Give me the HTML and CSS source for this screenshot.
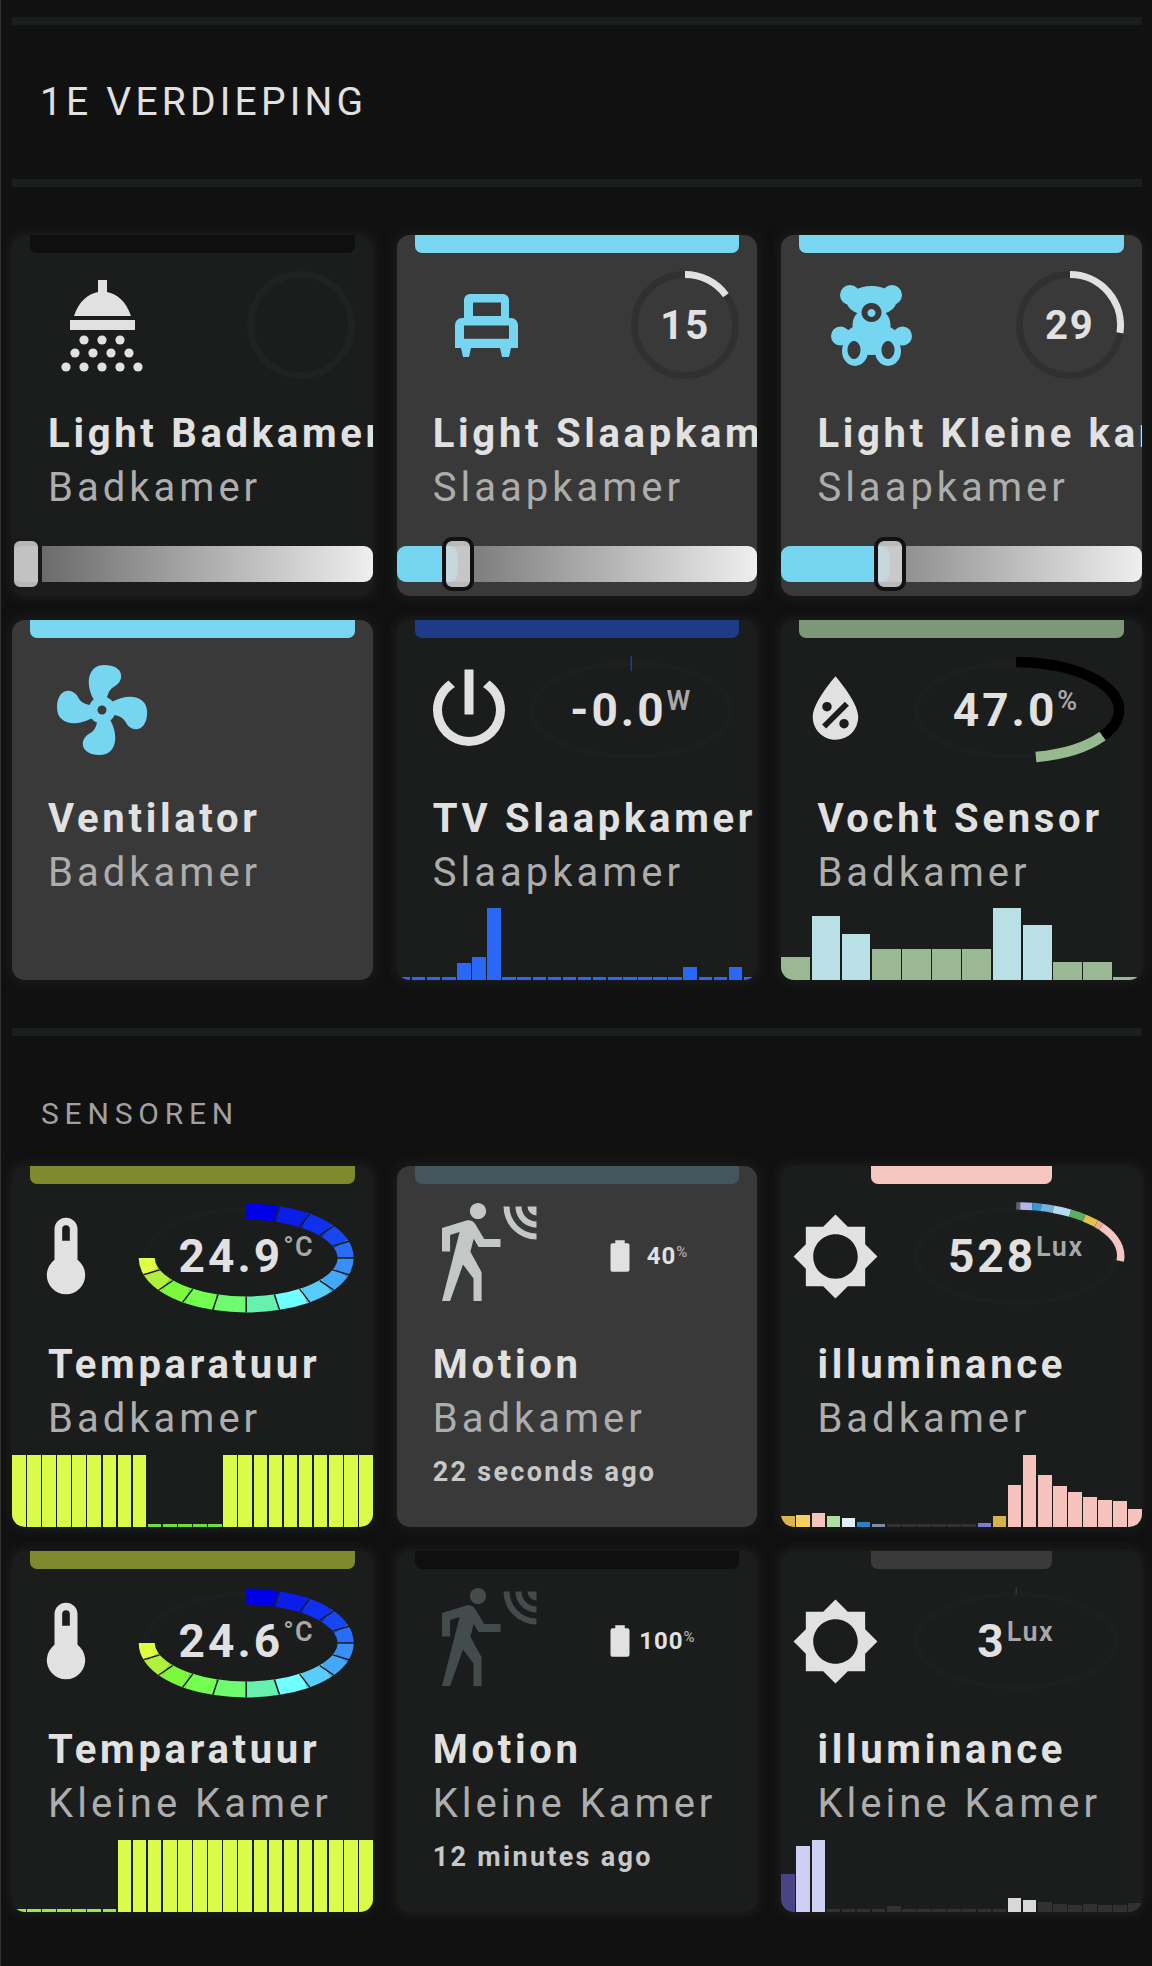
FILE: index.html
```html
<!DOCTYPE html>
<html>
<head>
    <title>1e Verdieping</title>
    <meta charset="utf-8">
    <link rel="stylesheet" href="styles.css">
</head>
<body>
<svg class="defs">
    <symbol id="temp-arc" viewBox="-108 -54 216 108" overflow="visible">
        <g class="temp-segs">
            <path stroke="#0000e8" d="M0-46.5A99.5 46.5 0 0 1 30.7-44.2"/>
            <path stroke="#0a1ee8" d="M30.7-44.2A99.5 46.5 0 0 1 58.5-37.6"/>
            <path stroke="#0f30ee" d="M58.5-37.6A99.5 46.5 0 0 1 80.5-27.3"/>
            <path stroke="#1846f0" d="M80.5-27.3A99.5 46.5 0 0 1 94.6-14.4"/>
            <path stroke="#2a6cf5" d="M94.6-14.4A99.5 46.5 0 0 1 99.5 0"/>
            <path stroke="#3a8ef8" d="M99.5 0A99.5 46.5 0 0 1 94.6 14.4"/>
            <path stroke="#44a8f8" d="M94.6 14.4A99.5 46.5 0 0 1 80.5 27.3"/>
            <path stroke="#58cdfb" d="M80.5 27.3A99.5 46.5 0 0 1 58.5 37.6"/>
            <path stroke="#70ffff" d="M58.5 37.6A99.5 46.5 0 0 1 30.7 44.2"/>
            <path stroke="#66f2ae" d="M30.7 44.2A99.5 46.5 0 0 1 0 46.5"/>
            <path stroke="#6ffb70" d="M0 46.5A99.5 46.5 0 0 1-30.7 44.2"/>
            <path stroke="#74ff50" d="M-30.7 44.2A99.5 46.5 0 0 1-58.5 37.6"/>
            <path stroke="#7bf93e" d="M-58.5 37.6A99.5 46.5 0 0 1-80.5 27.3"/>
            <path stroke="#b0f03f" d="M-80.5 27.3A99.5 46.5 0 0 1-94.6 14.4"/>
            <path stroke="#deff42" d="M-94.6 14.4A99.5 46.5 0 0 1-99.5 0"/>
        </g>
        <path class="temp-ticks" d="M28.1-36.6L33.4-51.8M53.5-31.1L63.5-44.1M73.6-22.6L87.4-32M86.5-11.9L102.7-16.8M91 0L108 0M86.5 11.9L102.7 16.8M73.6 22.6L87.4 32M53.5 31.1L63.5 44.1M28.1 36.6L33.4 51.8M0 38.5L0 54.5M-28.1 36.6L-33.4 51.8M-53.5 31.1L-63.5 44.1M-73.6 22.6L-87.4 32M-86.5 11.9L-102.7 16.8"/>
    </symbol>
    <symbol id="sun" viewBox="0 0 24 24">
        <path d="M20 8.69V4h-4.69L12 .69 8.69 4H4v4.69L.69 12 4 15.31V20h4.69L12 23.31 15.31 20H20v-4.69L23.31 12 20 8.69zM12 18c-3.31 0-6-2.69-6-6s2.69-6 6-6 6 2.69 6 6-2.69 6-6 6z"/>
    </symbol>
    <symbol id="thermo" viewBox="0 0 24 24">
        <path d="M15 13V5A3 3 0 0 0 9 5V13A5 5 0 1 0 15 13M12 4A1 1 0 0 1 13 5V8H11V5A1 1 0 0 1 12 4Z"/>
    </symbol>
    <symbol id="motion" viewBox="0 0 24 24">
        <path d="M10,0.2C9,0.2 8.2,1 8.2,2C8.2,3 9,3.8 10,3.8C11,3.8 11.8,3 11.8,2C11.8,1 11,0.2 10,0.2M15.67,1A7.33,7.33 0 0,0 23,8.33V7A6,6 0 0,1 17,1H15.67M18.33,1C18.33,3.58 20.42,5.67 23,5.67V4.33C21.16,4.33 19.67,2.84 19.67,1H18.33M21,1A2,2 0 0,0 23,3V1H21M7.92,4.03C7.75,4.03 7.58,4.06 7.42,4.11L2,5.8V11H3.8V7.33L5.91,6.67L2,22H3.8L6.67,13.89L9,17V22H10.8V15.59L8.31,11.05L9.04,8.18L10.12,10H15V8.2H11.38L9.38,4.87C9.08,4.37 8.54,4.03 7.92,4.03Z"/>
    </symbol>
    <symbol id="battery" viewBox="0 0 24 24">
        <path d="M16.67,4H15V2H9V4H7.33A1.33,1.33 0 0,0 6,5.33V20.67C6,21.4 6.6,22 7.33,22H16.67A1.33,1.33 0 0,0 18,20.67V5.33C18,4.6 17.4,4 16.67,4Z"/>
    </symbol>
</svg>

<div class="divider first"></div>
<h1 class="floor-title">1E VERDIEPING</h1>
<div class="divider"></div>

<div class="grid lights">
    <!-- lights -->
    <div class="card off">
        <div class="bar"></div>
        <div class="head">
            <div class="slot-half">
                <svg class="ico shower" viewBox="0 0 96 96">
                    <path d="M44 0h9v12c10 2 19 9 24 24H20c5-15 14-22 24-24zM16 40h65v10H16z"/>
                    <g>
                        <circle cx="30" cy="60" r="4.6"/><circle cx="48" cy="60" r="4.6"/><circle cx="66" cy="60" r="4.6"/>
                        <circle cx="21" cy="73" r="4.6"/><circle cx="39" cy="73" r="4.6"/><circle cx="57" cy="73" r="4.6"/><circle cx="75" cy="73" r="4.6"/>
                        <circle cx="12" cy="87" r="4.6"/><circle cx="30" cy="87" r="4.6"/><circle cx="48" cy="87" r="4.6"/><circle cx="66" cy="87" r="4.6"/><circle cx="84" cy="87" r="4.6"/>
                    </g>
                </svg>
            </div>
            <div class="ring-slot">
                <svg class="ring" viewBox="-54 -54 108 108"><circle class="ring-track" r="50.5"/></svg>
            </div>
        </div>
        <div class="name">Light Badkamer</div>
        <div class="state">Badkamer</div>
        <div class="slider">
            <div class="thumb" style="left:4%"></div>
        </div>
    </div>

    <div class="card on">
        <div class="bar"></div>
        <div class="head">
            <div class="slot-half">
                <svg class="ico bed" viewBox="0 0 63 63">
                    <path fill-rule="evenodd" d="M15 0h33a6 6 0 0 1 6 6v18h2a7 7 0 0 1 7 7v23h-7l-2 9h-7l-2-9H16l-2 9H8l-2-9H0V31a7 7 0 0 1 7-7h2V6a6 6 0 0 1 6-6zM18 8.400v13.600h28V8.400zM9 31.400v13.400h45V31.400z"/>
                </svg>
            </div>
            <div class="ring-slot">
                <svg class="ring" viewBox="-54 -54 108 108">
                    <circle class="ring-track" r="50.5"/>
                    <path class="ring-arc" d="M0-50.500A50.500 50.500 0 0 1 40.900-29.700"/>
                </svg>
                <span class="ring-num">15</span>
            </div>
        </div>
        <div class="name">Light Slaapkamer</div>
        <div class="state">Slaapkamer</div>
        <div class="slider">
            <div class="fill" style="width:17%"></div>
            <div class="thumb" style="left:17%"></div>
        </div>
    </div>

    <div class="card on">
        <div class="bar"></div>
        <div class="head">
            <div class="slot-half">
                <svg class="ico teddy" viewBox="0 0 81 81">
                    <circle cx="19" cy="10" r="10"/><circle cx="61" cy="10" r="10"/>
                    <ellipse cx="40.500" cy="16" rx="25" ry="15"/>
                    <ellipse cx="40.500" cy="40" rx="19" ry="18"/>
                    <circle cx="9.500" cy="51" r="9.500"/><circle cx="71.500" cy="51" r="9.500"/>
                    <ellipse cx="40.500" cy="54" rx="28" ry="16"/>
                    <ellipse cx="24" cy="66" rx="13" ry="15"/><ellipse cx="57" cy="66" rx="13" ry="15"/>
                    <path class="teddy-hole" d="M40.500 18a10 9.500 0 1 0 .01 0zM40.500 24a4 4 0 1 1-.01 0zM23 56a6.500 9 0 1 0 .01 0zM57 56a6.500 9 0 1 0 .01 0z" fill-rule="evenodd"/>
                </svg>
            </div>
            <div class="ring-slot">
                <svg class="ring" viewBox="-54 -54 108 108">
                    <circle class="ring-track" r="50.5"/>
                    <path class="ring-arc" d="M0-50.500A50.500 50.500 0 0 1 49.900 7.900"/>
                </svg>
                <span class="ring-num">29</span>
            </div>
        </div>
        <div class="name">Light Kleine kamer</div>
        <div class="state">Slaapkamer</div>
        <div class="slider">
            <div class="fill" style="width:30%"></div>
            <div class="thumb" style="left:30%"></div>
        </div>
    </div>

    <div class="card on">
        <div class="bar"></div>
        <div class="head">
            <div class="slot-half">
                <svg class="ico fan" viewBox="0 0 24 24">
                    <path d="M12,11A1,1 0 0,0 11,12A1,1 0 0,0 12,13A1,1 0 0,0 13,12A1,1 0 0,0 12,11M12.5,2C17,2 17.11,5.57 14.75,6.75C13.76,7.24 13.32,8.29 13.13,9.22C13.61,9.42 14.03,9.73 14.35,10.13C18.05,8.13 22.03,8.92 22.03,12.5C22.03,17 18.46,17.1 17.28,14.73C16.78,13.74 15.72,13.3 14.79,13.11C14.59,13.59 14.28,14 13.88,14.34C15.87,18.03 15.08,22 11.5,22C7,22 6.91,18.42 9.27,17.24C10.25,16.75 10.69,15.71 10.89,14.79C10.4,14.59 9.97,14.27 9.65,13.87C5.96,15.85 2,15.07 2,11.5C2,7 5.56,6.89 6.74,9.26C7.24,10.25 8.29,10.68 9.22,10.87C9.41,10.39 9.73,9.97 10.14,9.65C8.15,5.96 8.94,2 12.5,2Z"/>
                </svg>
            </div>
        </div>
        <div class="name">Ventilator</div>
        <div class="state">Badkamer</div>
    </div>

    <div class="card off tv">
        <div class="bar"></div>
        <div class="head">
            <div class="slot-icon power-slot">
                <svg class="ico power" viewBox="0 0 24 24">
                    <path d="M16.56,5.44L15.11,6.89C16.84,7.94 18,9.83 18,12A6,6 0 0,1 12,18A6,6 0 0,1 6,12C6,9.83 7.16,7.94 8.88,6.88L7.44,5.44C5.36,6.88 4,9.28 4,12A8,8 0 0,0 12,20A8,8 0 0,0 20,12C20,9.28 18.64,6.88 16.56,5.44M13,3H11V13H13"/>
                </svg>
            </div>
            <div class="gauge">
                <svg class="gauge-svg" viewBox="-108 -54 216 108">
                    <ellipse class="gauge-ghost" rx="100" ry="46.500"/>
                    <path class="tick-blue" d="M0-54V-39"/>
                </svg>
                <span class="value">-0.0<sup>W</sup></span>
            </div>
        </div>
        <div class="name">TV Slaapkamer</div>
        <div class="state">Slaapkamer</div>
        <div class="graph">
            <i style="height:3px"></i><i style="height:3px"></i><i style="height:3px"></i><i style="height:3px"></i><i style="height:17px"></i><i style="height:23px"></i><i style="height:72px"></i><i style="height:3px"></i><i style="height:3px"></i><i style="height:3px"></i><i style="height:3px"></i><i style="height:3px"></i><i style="height:3px"></i><i style="height:3px"></i><i style="height:3px"></i><i style="height:3px"></i><i style="height:3px"></i><i style="height:3px"></i><i style="height:3px"></i><i style="height:13px"></i><i style="height:3px"></i><i style="height:3px"></i><i style="height:13px"></i><i style="height:3px"></i>
        </div>
    </div>

    <div class="card off humid">
        <div class="bar"></div>
        <div class="head">
            <div class="slot-icon">
                <svg class="ico drop" viewBox="0 0 24 24">
                    <path d="M12,3.25C12,3.25 6,10 6,14C6,17.32 8.69,20 12,20A6,6 0 0,0 18,14C18,10 12,3.25 12,3.25M14.47,9.97L15.53,11.03L9.53,17.03L8.47,15.97M9.75,10A1.25,1.25 0 0,1 11,11.25A1.25,1.25 0 0,1 9.75,12.5A1.25,1.25 0 0,1 8.5,11.25A1.25,1.25 0 0,1 9.75,10M14.25,14.5A1.25,1.25 0 0,1 15.5,15.75A1.25,1.25 0 0,1 14.25,17A1.25,1.25 0 0,1 13,15.75A1.25,1.25 0 0,1 14.25,14.5Z"/>
                </svg>
            </div>
            <div class="gauge">
                <svg class="gauge-svg" viewBox="-108 -54 216 108">
                    <ellipse class="gauge-ghost" rx="100" ry="46.500"/>
                    <path class="humid-rest" d="M0-48A103 48 0 0 1 86.400 26.100"/>
                    <path class="humid-val" d="M86.400 26.100A103 48 0 0 1 19.700 47.100"/>
                </svg>
                <span class="value">47.0<sup>%</sup></span>
            </div>
        </div>
        <div class="name">Vocht Sensor</div>
        <div class="state">Badkamer</div>
        <div class="graph wide">
            <i class="gr" style="height:23px"></i><i class="bl" style="height:64px"></i><i class="bl" style="height:46px"></i><i class="gr" style="height:31px"></i><i class="gr" style="height:31px"></i><i class="gr" style="height:31px"></i><i class="gr" style="height:31px"></i><i class="bl" style="height:72px"></i><i class="bl" style="height:55px"></i><i class="gr" style="height:18px"></i><i class="gr" style="height:18px"></i><i class="gr" style="height:3px"></i>
        </div>
    </div>
</div>

<div class="divider mid"></div>
<h2 class="sub-title">SENSOREN</h2>

<div class="grid">
    <div class="card off temp">
        <div class="bar"></div>
        <div class="head">
            <div class="slot-icon">
                <svg class="ico thermo"><use href="#thermo"/></svg>
            </div>
            <div class="gauge">
                <svg class="gauge-svg" viewBox="-108 -54 216 108">
                    <ellipse class="gauge-ghost" rx="100" ry="46.500"/>
                </svg>
                <svg class="gauge-svg temp-arc"><use href="#temp-arc"/></svg>
                <span class="value">24.9<sup>°C</sup></span>
            </div>
        </div>
        <div class="name">Temparatuur</div>
        <div class="state">Badkamer</div>
        <div class="graph">
            <i class="y" style="height:72px"></i><i class="y" style="height:72px"></i><i class="y" style="height:72px"></i><i class="y" style="height:72px"></i><i class="y" style="height:72px"></i><i class="y" style="height:72px"></i><i class="y" style="height:72px"></i><i class="y" style="height:72px"></i><i class="y" style="height:72px"></i><i class="g" style="height:3px"></i><i class="g" style="height:3px"></i><i class="g" style="height:3px"></i><i class="g" style="height:3px"></i><i class="g" style="height:3px"></i><i class="y" style="height:72px"></i><i class="y" style="height:72px"></i><i class="y" style="height:72px"></i><i class="y" style="height:72px"></i><i class="y" style="height:72px"></i><i class="y" style="height:72px"></i><i class="y" style="height:72px"></i><i class="y" style="height:72px"></i><i class="y" style="height:72px"></i><i class="y" style="height:72px"></i>
        </div>
    </div>

    <div class="card on motion-on">
        <div class="bar"></div>
        <div class="head">
            <div class="slot-half">
                <svg class="ico motion"><use href="#motion"/></svg>
            </div>
            <div class="batt">
                <svg class="batt-ico"><use href="#battery"/></svg>
                <span class="batt-num">40<sup>%</sup></span>
            </div>
        </div>
        <div class="name">Motion</div>
        <div class="state">Badkamer</div>
        <div class="since">22 seconds ago</div>
    </div>

    <div class="card off lux-on">
        <div class="bar"></div>
        <div class="head">
            <div class="slot-icon">
                <svg class="ico sun"><use href="#sun"/></svg>
            </div>
            <div class="gauge">
                <svg class="gauge-svg" viewBox="-108 -54 216 108">
                    <ellipse class="gauge-ghost" rx="100" ry="46.500"/>
                    <g class="lux-segs">
                        <path stroke="#5f6068" d="M0-50A104 50 0 0 1 4-49.960"/>
                        <path stroke="#b4b4ec" d="M4-49.960A104 50 0 0 1 16-49.400"/>
                        <path stroke="#3a95d5" d="M16-49.400A104 50 0 0 1 25-48.600"/>
                        <path stroke="#74b3de" d="M25-48.600A104 50 0 0 1 37-46.800"/>
                        <path stroke="#b4dcec" d="M37-46.800A104 50 0 0 1 54-42.900"/>
                        <path stroke="#5cb062" d="M54-42.900A104 50 0 0 1 68-38.100"/>
                        <path stroke="#e2c24c" d="M68-38.100A104 50 0 0 1 80-32.400"/>
                        <path stroke="#f0a890" d="M80-32.400A104 50 0 0 1 85-29.400"/>
                        <path stroke="#f6c7c1" d="M85-29.400A104 50 0 0 1 104 5"/>
                    </g>
                </svg>
                <span class="value">528<sup>Lux</sup></span>
            </div>
        </div>
        <div class="name">illuminance</div>
        <div class="state">Badkamer</div>
        <div class="graph">
            <i style="height:11px;background:#dbb54c"></i><i style="height:12px;background:#f5cf60"></i><i style="height:14px;background:#f4c3bd"></i><i style="height:11px;background:#aee0a5"></i><i style="height:9px;background:#dff1f7"></i><i style="height:5px;background:#2d7fc0"></i><i style="height:3px;background:#7d8ca8"></i><i class="dk" style="height:3px"></i><i class="dk" style="height:3px"></i><i class="dk" style="height:3px"></i><i class="dk" style="height:3px"></i><i class="dk" style="height:3px"></i><i class="dk" style="height:3px"></i><i style="height:4px;background:#7b7bdc"></i><i style="height:11px;background:#d4b24c"></i><i class="pk" style="height:42px"></i><i class="pk" style="height:72px"></i><i class="pk" style="height:52px"></i><i class="pk" style="height:41px"></i><i class="pk" style="height:35px"></i><i class="pk" style="height:30px"></i><i class="pk" style="height:27px"></i><i class="pk" style="height:26px"></i><i class="pk" style="height:18px"></i>
        </div>
    </div>

    <div class="card off temp">
        <div class="bar"></div>
        <div class="head">
            <div class="slot-icon">
                <svg class="ico thermo"><use href="#thermo"/></svg>
            </div>
            <div class="gauge">
                <svg class="gauge-svg" viewBox="-108 -54 216 108">
                    <ellipse class="gauge-ghost" rx="100" ry="46.500"/>
                </svg>
                <svg class="gauge-svg temp-arc"><use href="#temp-arc"/></svg>
                <span class="value">24.6<sup>°C</sup></span>
            </div>
        </div>
        <div class="name">Temparatuur</div>
        <div class="state">Kleine Kamer</div>
        <div class="graph">
            <i class="g2" style="height:3px"></i><i class="g2" style="height:3px"></i><i class="g2" style="height:3px"></i><i class="g2" style="height:3px"></i><i class="g2" style="height:3px"></i><i class="g2" style="height:3px"></i><i class="g2" style="height:3px"></i><i class="y" style="height:72px"></i><i class="y" style="height:72px"></i><i class="y" style="height:72px"></i><i class="y" style="height:72px"></i><i class="y" style="height:72px"></i><i class="y" style="height:72px"></i><i class="y" style="height:72px"></i><i class="y" style="height:72px"></i><i class="y" style="height:72px"></i><i class="y" style="height:72px"></i><i class="y" style="height:72px"></i><i class="y" style="height:72px"></i><i class="y" style="height:72px"></i><i class="y" style="height:72px"></i><i class="y" style="height:72px"></i><i class="y" style="height:72px"></i><i class="y" style="height:72px"></i>
        </div>
    </div>

    <div class="card off motion-off">
        <div class="bar"></div>
        <div class="head">
            <div class="slot-half">
                <svg class="ico motion"><use href="#motion"/></svg>
            </div>
            <div class="batt">
                <svg class="batt-ico"><use href="#battery"/></svg>
                <span class="batt-num">100<sup>%</sup></span>
            </div>
        </div>
        <div class="name">Motion</div>
        <div class="state">Kleine Kamer</div>
        <div class="since">12 minutes ago</div>
    </div>

    <div class="card off lux-off">
        <div class="bar"></div>
        <div class="head">
            <div class="slot-icon">
                <svg class="ico sun"><use href="#sun"/></svg>
            </div>
            <div class="gauge">
                <svg class="gauge-svg" viewBox="-108 -54 216 108">
                    <ellipse class="gauge-ghost" rx="100" ry="46.500"/>
                    <path class="tick-grey" d="M0-54V-46"/>
                </svg>
                <span class="value">3<sup>Lux</sup></span>
            </div>
        </div>
        <div class="name">illuminance</div>
        <div class="state">Kleine Kamer</div>
        <div class="graph">
            <i style="height:38px;background:#4a4484"></i><i class="pu" style="height:66px"></i><i class="pu" style="height:72px"></i><i class="dk" style="height:3px"></i><i class="dk" style="height:3px"></i><i class="dk" style="height:3px"></i><i class="dk" style="height:3px"></i><i class="dk" style="height:6px"></i><i class="dk" style="height:3px"></i><i class="dk" style="height:3px"></i><i class="dk" style="height:3px"></i><i class="dk" style="height:3px"></i><i class="dk" style="height:3px"></i><i class="dk" style="height:3px"></i><i class="dk" style="height:3px"></i><i class="wh" style="height:14px"></i><i class="wh" style="height:12px"></i><i class="dk" style="height:10px"></i><i class="dk" style="height:8px"></i><i class="dk" style="height:7px"></i><i class="dk" style="height:8px"></i><i class="dk" style="height:7px"></i><i class="dk" style="height:7px"></i><i class="dk" style="height:9px"></i>
        </div>
    </div>
</div>
</body>
</html>
```

FILE: styles.css
```css
* {
    box-sizing: border-box;
}

html, body {
    margin: 0;
    padding: 0;
}

body {
    width: 1152px;
    height: 1966px;
    padding: 17px 10px 0 12px;
    background: #111111;
    color: #e1e1e1;
    font-family: Roboto, "Liberation Sans", sans-serif;
    overflow: hidden;
    position: relative;
    border-left: 1px solid #333;
    padding-left: 11px;
}

.defs {
    position: absolute;
    width: 0;
    height: 0;
}

.divider {
    height: 8px;
    background: #1b1e1f;
}

.floor-title {
    margin: 0;
    height: 154px;
    display: flex;
    align-items: center;
    padding-left: 28px;
    font-size: 39px;
    font-weight: 400;
    letter-spacing: 4.2px;
    color: #e1e1e1;
}

.divider.mid {
    margin-top: 48px;
}

.sub-title {
    margin: 0;
    height: 130px;
    display: flex;
    align-items: center;
    padding: 25px 0 0 29px;
    font-size: 30px;
    font-weight: 400;
    letter-spacing: 5.8px;
    color: #a0a0a0;
}

.grid {
    display: grid;
    grid-template-columns: repeat(3, 1fr);
    gap: 24px;
}

.lights {
    margin-top: 48px;
}

/* cards */
.card {
    aspect-ratio: 1 / 1;
    border-radius: 13px;
    overflow: hidden;
    display: flex;
    flex-direction: column;
    white-space: nowrap;
}

.card.off {
    background: #1b1c1c;
    box-shadow: 0 0 10px 3px #1b1c1c;
}

.card.on {
    background: #393939;
    box-shadow: 0 0 14px 2px #1b1d1d;
}

.bar {
    flex: none;
    width: 90%;
    height: 18px;
    margin: 0 auto;
    border-radius: 0 0 7px 7px;
    background: #78d6f0;
}

.card.off > .bar { background: #0f0f0f; }
.tv > .bar { background: #1d3b87 !important; }
.humid > .bar { background: #7d9878 !important; }
.temp > .bar { background: #7f8a2e !important; }
.motion-on > .bar { background: #44555b; }
.lux-on > .bar { width: 50%; background: #f6c7c1 !important; }
.lux-off > .bar { width: 50%; background: #3a3a3a !important; }

.head {
    flex: none;
    height: 144px;
    display: flex;
    align-items: center;
    position: relative;
}

.slot-half {
    flex: none;
    width: 50%;
    display: flex;
    justify-content: center;
}

.slot-icon {
    flex: none;
    width: 30%;
    display: flex;
    justify-content: center;
}

.power-slot {
    padding-left: 10%;
}

.ico {
    display: block;
    fill: #e1e1e1;
}

.shower { width: 96px; height: 96px; margin-top: 5px; }
.bed { width: 63px; height: 63px; fill: #76d6f2; }
.teddy { width: 81px; height: 81px; fill: #76d6f2; }
.teddy-hole { fill: #393939; }
.fan { width: 108px; height: 108px; fill: #76d6f2; }
.power { width: 108px; height: 108px; flex: none; margin-left: -18px; margin-right: -18px; }
.drop { width: 91px; height: 91px; flex: none; }
.thermo { width: 92px; height: 92px; flex: none; }
.sun { width: 89px; height: 89px; flex: none; }
.motion { width: 108px; height: 108px; }
.motion-on .motion { fill: #c3c7c6; }
.motion-off .motion { fill: #444b4d; }

/* round dimmer value */
.ring-slot {
    flex: none;
    width: 40%;
    margin-left: 10%;
    height: 108px;
    display: flex;
    align-items: center;
    justify-content: center;
    position: relative;
}

.ring {
    position: absolute;
    left: 50%;
    top: 0;
    width: 108px;
    height: 108px;
    margin-left: -54px;
}

.ring-track {
    fill: none;
    stroke: rgba(0, 0, 0, .14);
    stroke-width: 7;
}

.card.off .ring-track {
    stroke: #202222;
}

.ring-arc {
    fill: none;
    stroke: #e1e1e1;
    stroke-width: 7;
}

.ring-num {
    position: relative;
    font-size: 40px;
    font-weight: 700;
    letter-spacing: 2px;
}

/* oval sensor gauge */
.gauge {
    flex: none;
    width: 60%;
    margin-left: 5%;
    height: 108px;
    display: flex;
    align-items: center;
    justify-content: center;
    position: relative;
}

.gauge-svg {
    position: absolute;
    left: 0;
    top: 0;
    width: 100%;
    height: 100%;
    overflow: visible;
    fill: none;
}

.gauge-svg.temp-arc {
    top: 2px;
}

.gauge-ghost {
    stroke: #1d1e20;
    stroke-width: 6;
}

.tick-blue {
    stroke: #1f4fd8;
    stroke-width: 1;
}

.tick-grey {
    stroke: #3f4042;
    stroke-width: 1;
}

.humid-rest {
    stroke: #000;
    stroke-width: 10.5;
}

.humid-val {
    stroke: #96b98f;
    stroke-width: 10.5;
}

.temp-segs {
    fill: none;
    stroke-width: 16;
}

.temp-ticks {
    fill: none;
    stroke: #1b1c1c;
    stroke-width: 1.5;
}

.lux-segs {
    fill: none;
    stroke-width: 7.5;
}

.value {
    position: relative;
    font-size: 46px;
    font-weight: 700;
    letter-spacing: 3px;
    line-height: 1;
}

.value sup {
    font-size: 27px;
    font-weight: 600;
    line-height: 0;
    letter-spacing: 1.5px;
    vertical-align: 16px;
    color: #a8a8a8;
}

.batt {
    flex: none;
    display: flex;
    align-items: center;
    margin-left: 24px;
}

.batt-ico {
    width: 38px;
    height: 38px;
    fill: #e1e1e1;
    flex: none;
}

.batt-num {
    width: 56px;
    text-align: center;
    font-size: 24px;
    font-weight: 700;
    letter-spacing: 1px;
}

.batt-num sup {
    font-size: 15px;
    font-weight: 500;
    line-height: 0;
    letter-spacing: 0;
    vertical-align: 7px;
    color: #aaa;
}

/* card texts */
.name, .state {
    padding-left: 10%;
    line-height: 54px;
    font-size: 40px;
}

.name {
    margin-top: 10px;
    font-weight: 700;
    letter-spacing: 3.7px;
    color: #e1e1e1;
}

.state {
    font-weight: 400;
    letter-spacing: 4px;
    color: #adadad;
}

.since {
    margin-top: 6px;
    padding-left: 10%;
    line-height: 40px;
    font-size: 27px;
    font-weight: 700;
    letter-spacing: 2.3px;
    color: #c8c8c8;
}

/* dimmer */
.slider {
    flex: none;
    margin-top: 31px;
    height: 36px;
    border-radius: 9px;
    position: relative;
    background: linear-gradient(90deg, #5f5f5f, #efefef);
}

.fill {
    height: 100%;
    border-radius: 9px;
    background: #76d6f2;
}

.thumb {
    position: absolute;
    top: -9px;
    width: 32px;
    height: 54px;
    margin-left: -16px;
    border: 4px solid #111;
    border-radius: 10px;
    background: rgba(215, 215, 215, .82);
}

.card.off .thumb {
    border-color: #191919;
}

/* history graph */
.graph {
    margin-top: auto;
    height: 72px;
    flex: none;
    display: flex;
    align-items: flex-end;
    gap: 1.5px;
}

.graph i {
    display: block;
    flex: 1;
    background: #2a67f5;
}

.graph i.gr { background: #9ab893; }
.graph i.bl { background: #b9e0e5; }
.graph i.y { background: #dafb49; }
.graph i.g { background: #6fdd3f; }
.graph i.g2 { background: #9be83f; }
.graph i.dk { background: #303131; }
.graph i.pk { background: #f6c2bc; }
.graph i.pu { background: #cdcff3; }
.graph i.wh { background: #d8d8d8; }
```
